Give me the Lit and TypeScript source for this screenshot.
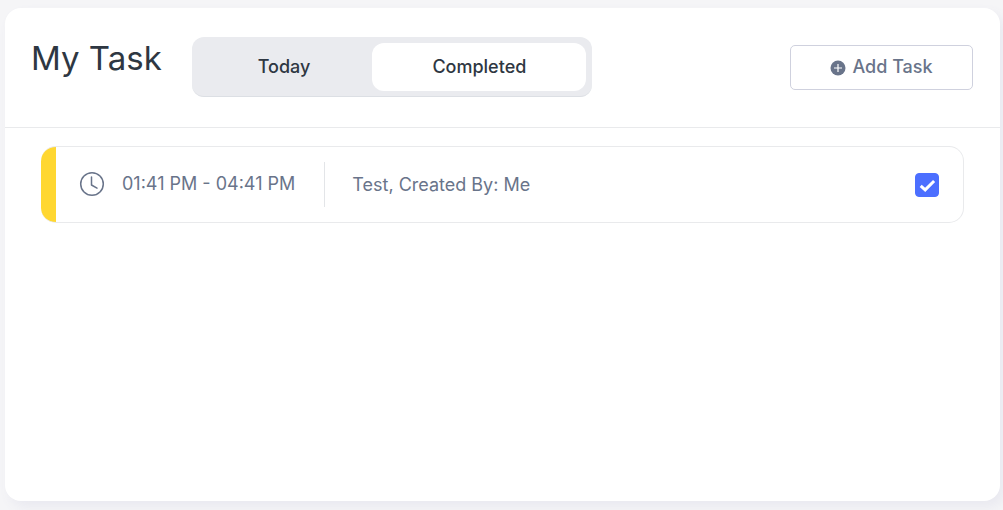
import { LitElement, html, css } from "lit";
import { customElement, property, state } from "lit/decorators.js";

interface Task {
  id: number;
  start: string;
  end: string;
  title: string;
  author: string;
  done: boolean;
}

@customElement("task-row")
class TaskRow extends LitElement {
  @property({ attribute: false }) task!: Task;

  static styles = css`
    :host {
      display: block;
    }
    .row {
      display: flex;
      align-items: center;
      padding: 15px 24px;
      border: 1px solid #e9eaec;
      border-radius: 15px;
      background: linear-gradient(to right, #ffd731 15px, #fff 15px) border-box;
      border-left: 0;
      color: #69748a;
      font-size: 18px;
      line-height: 26px;
    }
    .when {
      display: flex;
      align-items: center;
      gap: 17px;
      padding: 9px 29px 10px 14px;
      border-right: 1px solid #e3e5e8;
    }
    .clock {
      width: 26px;
      height: 26px;
      flex: none;
    }
    .what {
      flex: 1;
      padding-left: 27px;
    }
    .check {
      appearance: none;
      flex: none;
      width: 24px;
      height: 24px;
      margin: 0;
      border: 1px solid #4c6fff;
      border-radius: 4px;
      background: #fff;
      cursor: pointer;
    }
    .check:checked {
      background: #4c6fff
        url("data:image/svg+xml,%3Csvg xmlns='http://www.w3.org/2000/svg' viewBox='0 0 24 24'%3E%3Cpath d='M5.7 12.8l4.5 4.1 8.9-8.9' fill='none' stroke='%23fff' stroke-width='3'/%3E%3C/svg%3E")
        center / 24px 24px no-repeat border-box;
    }
  `;

  render() {
    const t = this.task;
    return html`
      <div class="row">
        <div class="when">
          <svg class="clock" viewBox="0 0 26 26" fill="none" stroke="#69748a" aria-hidden="true">
            <circle cx="13" cy="13" r="11.3" stroke-width="1.5" />
            <path d="M12.5 6v8l5.5 3.2" stroke-width="1.5" stroke-linecap="round" stroke-linejoin="round" />
          </svg>
          <span>${t.start} - ${t.end}</span>
        </div>
        <label class="what" for="done">${t.title}, Created By: ${t.author}</label>
        <input class="check" id="done" type="checkbox" .checked=${t.done} />
      </div>
    `;
  }
}

@customElement("app-root")
class AppRoot extends LitElement {
  @state() private tab = "Completed";

  private tasks: Task[] = [
    { id: 1, start: "01:41 PM", end: "04:41 PM", title: "Test", author: "Me", done: true },
  ];

  static styles = css`
    :host {
      display: flex;
      box-sizing: border-box;
      min-height: 100vh;
      padding: 8px 3px 9px 5px;
      background: #f5f5f7;
      font-family: Inter, "Liberation Sans", sans-serif;
      color: #2e3742;
    }
    .card {
      flex: 1;
      border-radius: 16px;
      background: #fff;
      box-shadow: 5px 6px 12px #e9e9f0;
    }
    .head {
      display: flex;
      align-items: flex-start;
      padding: 29px 27px 30px 26px;
      border-bottom: 1px solid #e9eaec;
    }
    .title {
      margin: 0 30px 0 0;
      font-size: 33px;
      font-weight: 400;
      line-height: 42px;
    }
    .tabs {
      display: flex;
      gap: 2px;
      padding: 6px 6px 5px;
      border-bottom: 1px solid #dcdfe4;
      border-radius: 12px;
      background: #eaebef;
    }
    .tab {
      padding: 12px 60px;
      border: 0;
      border-radius: 12px;
      background: none;
      color: inherit;
      font: 500 18px/24px Inter, "Liberation Sans", sans-serif;
      cursor: pointer;
    }
    .tab[aria-selected="true"] {
      background: #fff;
    }
    .add {
      display: flex;
      align-items: center;
      justify-content: center;
      gap: 6px;
      min-width: 183px;
      margin: 8px 0 0 auto;
      padding: 10px 24px 11px;
      border: 1px solid #cfd1de;
      border-radius: 5px;
      background: #fff;
      color: #69748a;
      font: 500 18px/22px Inter, "Liberation Sans", sans-serif;
      cursor: pointer;
    }
    .plus {
      width: 16px;
      height: 16px;
      margin-top: 2px;
    }
    .list {
      display: grid;
      gap: 16px;
      padding: 18px 36px;
    }
  `;

  render() {
    return html`
      <main class="card">
        <header class="head">
          <h1 class="title">My Task</h1>
          <div class="tabs" role="tablist">
            ${["Today", "Completed"].map(
              (name) => html`
                <button
                  class="tab"
                  role="tab"
                  aria-selected=${this.tab === name ? "true" : "false"}
                  @click=${() => (this.tab = name)}
                >${name}</button>
              `
            )}
          </div>
          <button class="add">
            <svg class="plus" viewBox="0 0 16 16" aria-hidden="true">
              <circle cx="8" cy="8" r="7.5" fill="#69748a" />
              <path d="M8 4v8M4 8h8" stroke="#fff" stroke-width="1.2" />
            </svg>
            Add Task
          </button>
        </header>
        <section class="list">
          ${this.tasks.map((t) => html`<task-row .task=${t}></task-row>`)}
        </section>
      </main>
    `;
  }
}
